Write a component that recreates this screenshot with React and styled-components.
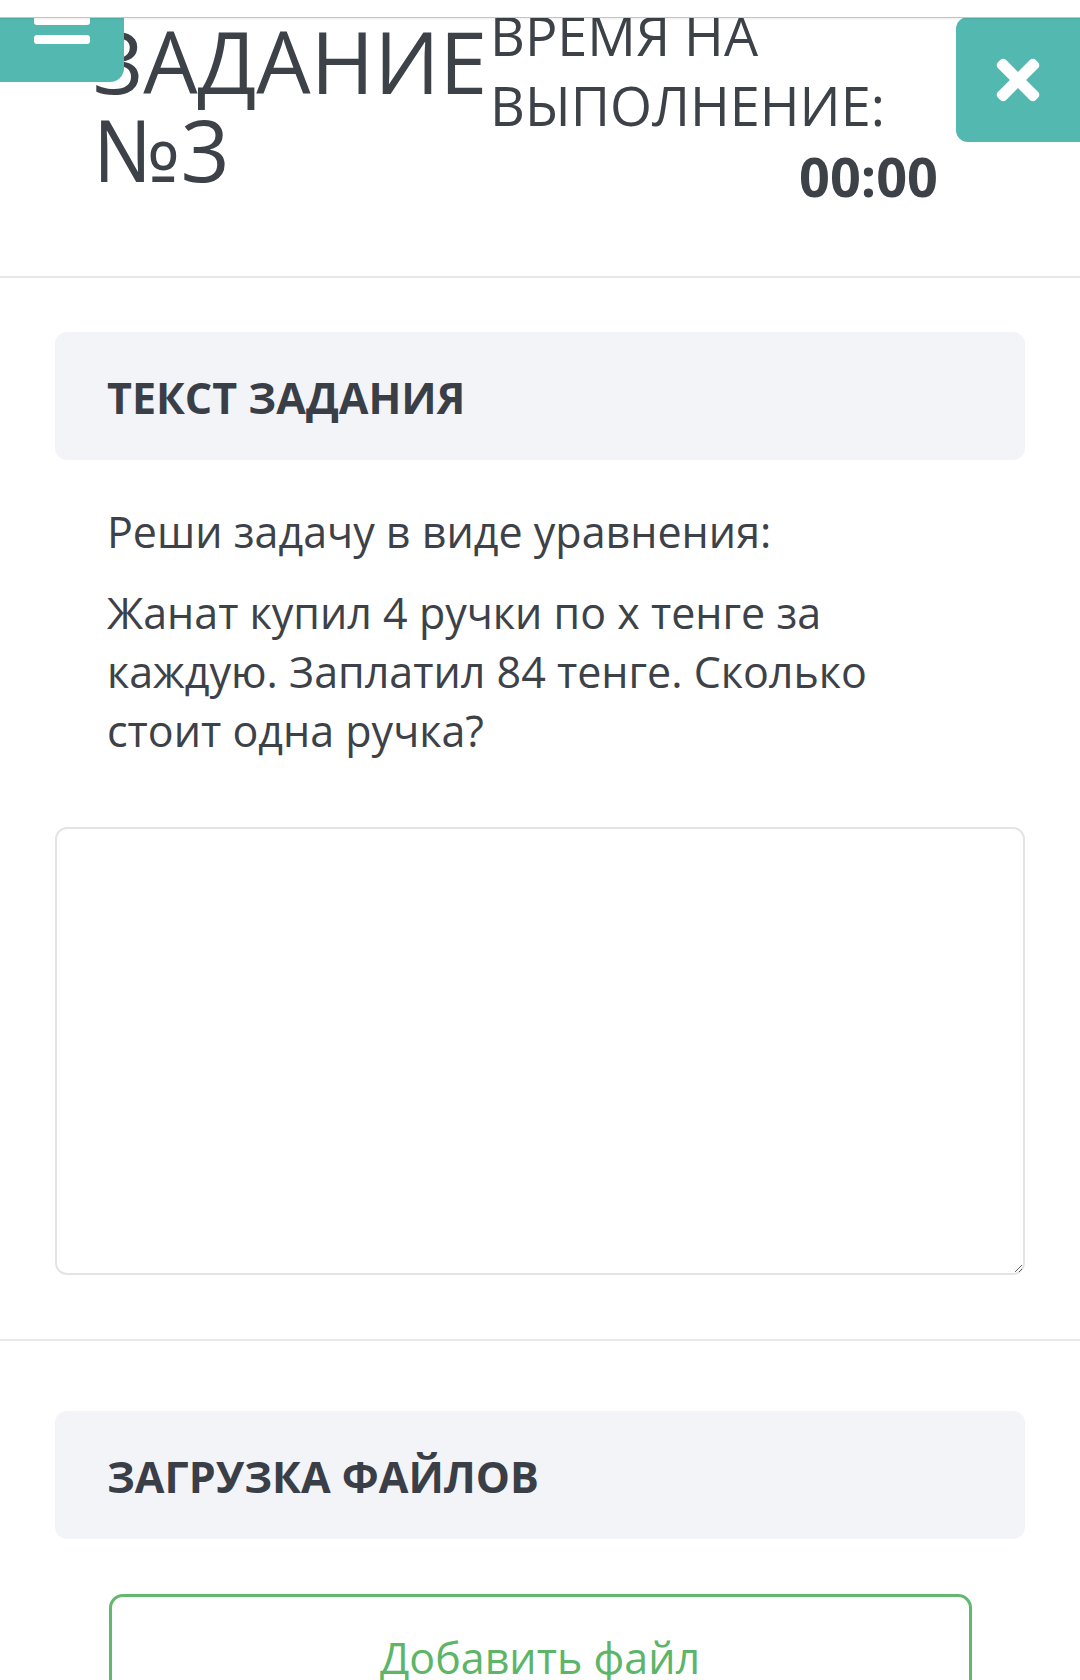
import React from 'react'
import styled, { createGlobalStyle } from 'styled-components'
import { FaTimes } from 'react-icons/fa'

const GlobalStyle = createGlobalStyle`
    * { box-sizing: border-box; }
    body {
        margin: 0;
        background: #fff;
        font-family: "Open Sans", "Noto Sans", sans-serif;
        color: #3d4148;
    }
`

const TopStrip = styled.div`
    height: 18px;
    background: #fff;
    border-bottom: 1px solid #c4c4c4;
    box-shadow: 0 1px 2px rgba(0, 0, 0, 0.08);
    position: relative;
    z-index: 2;
`

const Header = styled.header`
    position: relative;
    height: 261px;
    overflow: hidden;
    display: flex;
    align-items: flex-start;
    padding-left: 93px;
    border-bottom: 2px solid #e7e8ea;
    margin-top: -1px;
`

const MenuButton = styled.button`
    position: absolute;
    top: -20px;
    left: 0;
    width: 124px;
    height: 85px;
    border: none;
    background: #53b8b0;
    border-bottom-right-radius: 14px;
    display: flex;
    flex-direction: column;
    align-items: center;
    gap: 10px;
    padding: 0;
    z-index: 1;
`

const MenuBar = styled.span`
    display: block;
    width: 56px;
    height: 9px;
    border-radius: 3px;
    background: #fff;
    flex-shrink: 0;
`

const Title = styled.h1`
    margin: 0;
    font-size: 86px;
    line-height: 88px;
    font-weight: 400;
    color: #3d4148;
    width: 397px;
    flex-shrink: 0;
`

const Timer = styled.div`
    margin-top: -17px;
    width: 448px;
    display: flex;
    flex-direction: column;
`

const TimerLabel = styled.div`
    font-size: 54px;
    line-height: 70px;
`

const TimerValue = styled.div`
    font-size: 54px;
    line-height: 72px;
    font-weight: 700;
    text-align: right;
`

const CloseButton = styled.button`
    margin-left: auto;
    width: 124px;
    height: 125px;
    border: none;
    background: #53b8b0;
    border-radius: 12px 0 0 12px;
    color: #fff;
    display: flex;
    align-items: center;
    justify-content: center;
    font-size: 62px;
    padding: 0;
`

const Section = styled.section`
    padding: ${p => p.$top}px 55px ${p => p.$bottom}px;
    border-bottom: ${p => (p.$divided ? '2px solid #e7e8ea' : 'none')};
`

const CardHead = styled.div`
    height: 128px;
    background: #f3f4f7;
    border-radius: 12px;
    display: flex;
    align-items: center;
    padding: 2px 52px 0;
`

const CardTitle = styled.h2`
    margin: 0;
    font-size: 43px;
    font-weight: 700;
    color: #3a3e46;
`

const TaskText = styled.div`
    padding: 42px 52px 0;
`

const Paragraph = styled.p`
    margin: 0 0 22px;
    font-size: 43px;
    line-height: 59px;
    color: #3d4148;
`

const Answer = styled.textarea`
    display: block;
    width: 100%;
    height: 448px;
    margin-top: 67px;
    border: 2px solid #e3e4e6;
    border-radius: 12px;
    resize: vertical;
    font-family: inherit;
`

const AddFileButton = styled.button`
    display: block;
    width: 863px;
    height: 130px;
    margin: 55px auto 0;
    background: #fff;
    border: 3px solid #63b86f;
    border-radius: 14px;
    color: #5cb568;
    font-family: "Open Sans", sans-serif;
    font-size: 43px;
    padding: 0 0 4px;
`

const App = () => {
    return (
        <>
            <GlobalStyle />
            <TopStrip />
            <Header>
                <MenuButton aria-label="menu">
                    <MenuBar />
                    <MenuBar />
                    <MenuBar />
                </MenuButton>
                <Title>ЗАДАНИЕ №3</Title>
                <Timer>
                    <TimerLabel>ВРЕМЯ НА<br />ВЫПОЛНЕНИЕ:</TimerLabel>
                    <TimerValue>00:00</TimerValue>
                </Timer>
                <CloseButton aria-label="close"><FaTimes /></CloseButton>
            </Header>

            <Section $top={54} $bottom={64} $divided>
                <CardHead><CardTitle>ТЕКСТ ЗАДАНИЯ</CardTitle></CardHead>
                <TaskText>
                    <Paragraph>Реши задачу в виде уравнения:</Paragraph>
                    <Paragraph>Жанат купил 4 ручки по х тенге за каждую. Заплатил 84 тенге. Сколько стоит одна ручка?</Paragraph>
                </TaskText>
                <Answer />
            </Section>

            <Section $top={70} $bottom={40}>
                <CardHead><CardTitle>ЗАГРУЗКА ФАЙЛОВ</CardTitle></CardHead>
                <AddFileButton>Добавить файл</AddFileButton>
            </Section>
        </>
    )
}

export default App
